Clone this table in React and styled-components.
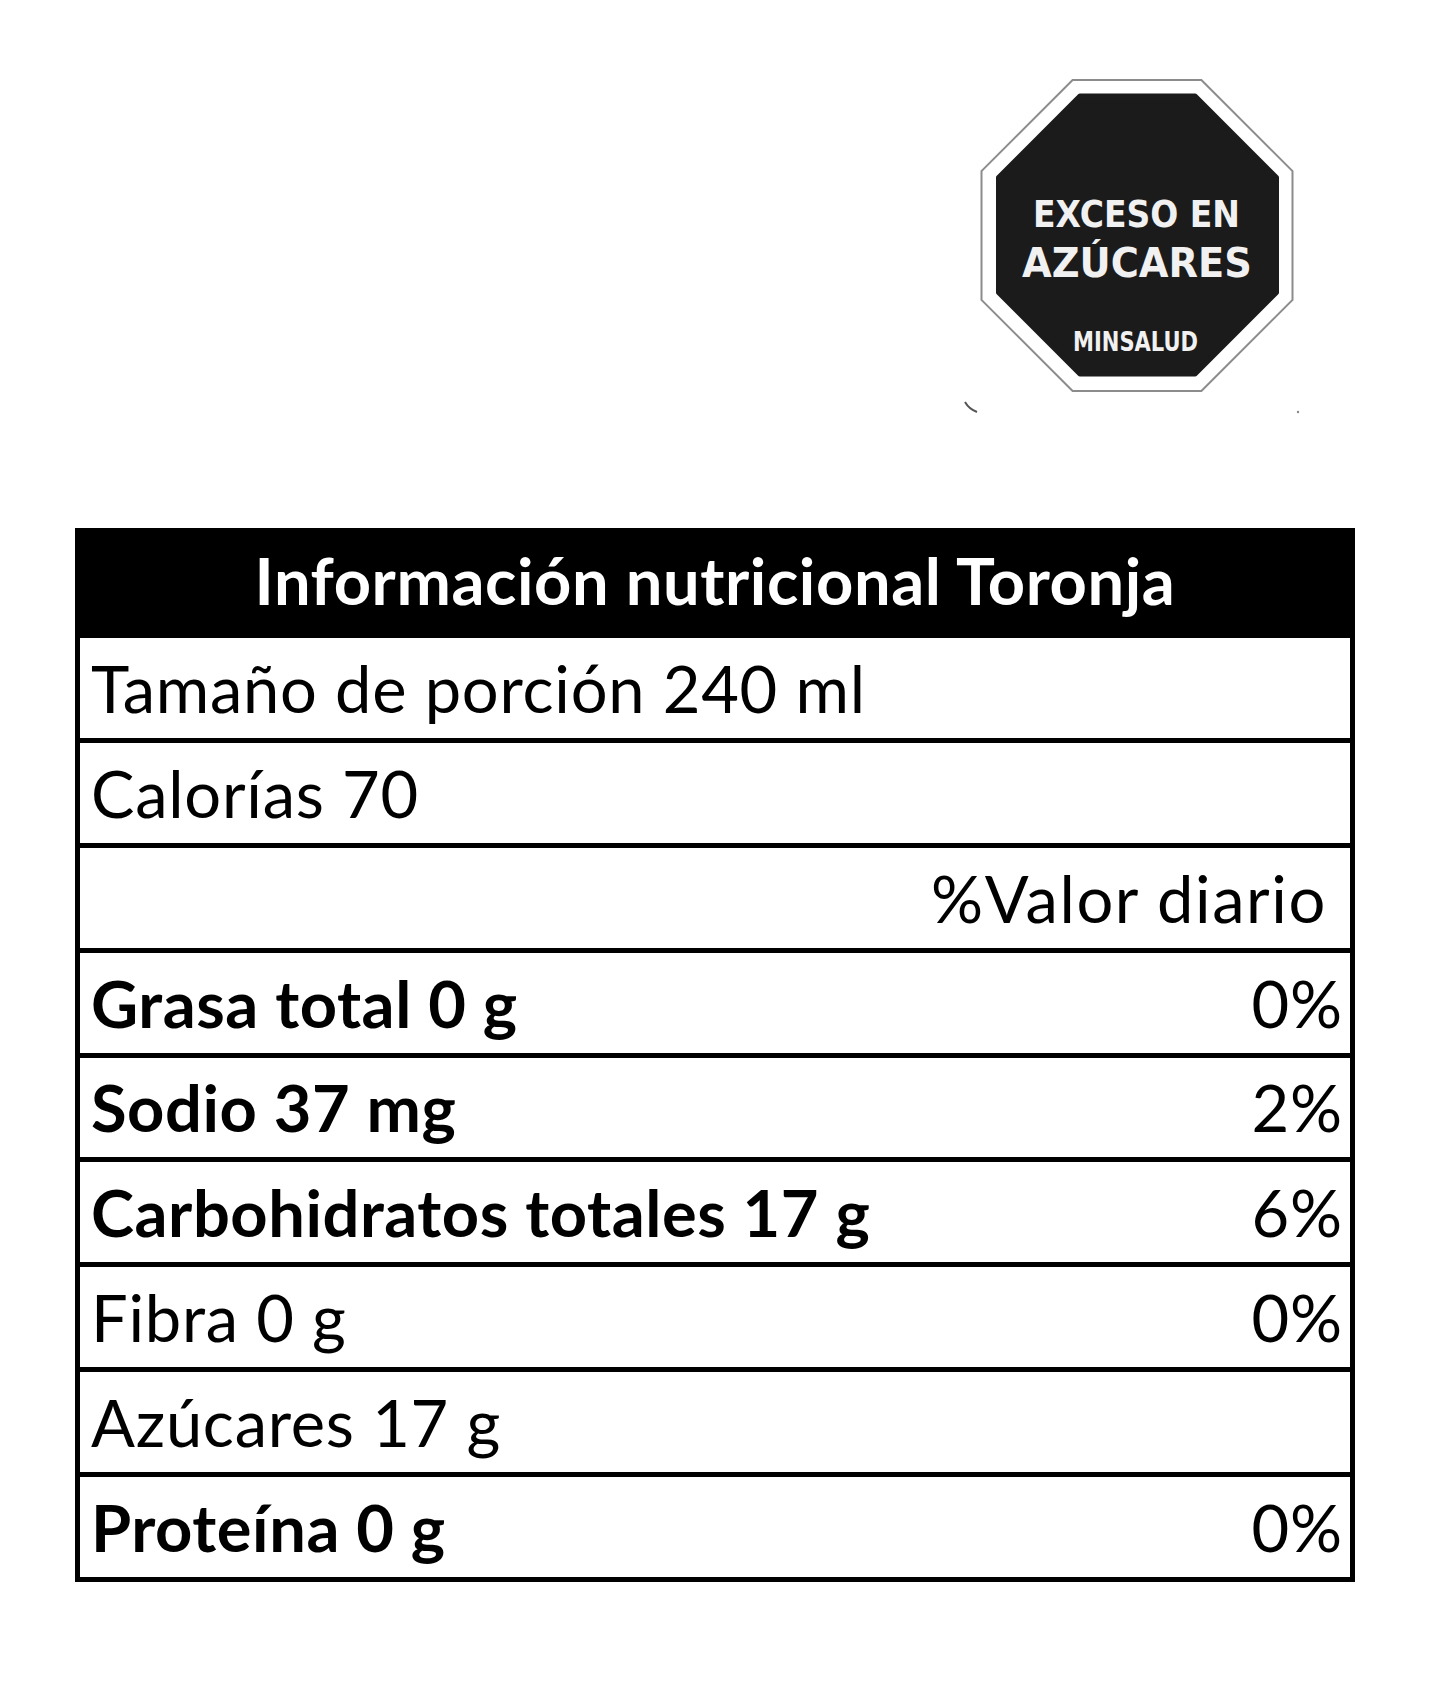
import styled, { createGlobalStyle } from 'styled-components';

const GlobalStyle = createGlobalStyle`
  html, body {
    margin: 0;
    padding: 0;
    background: #ffffff;
  }
`;

const Page = styled.main`
  width: 1445px;
  min-height: 1686px;
  background: #ffffff;
  font-family: Lato, 'Open Sans', sans-serif;
  color: #000;
`;

const SealRow = styled.div`
  display: flex;
  justify-content: flex-end;
  padding: 70px 135px 0 0;
`;

const Table = styled.section`
  box-sizing: border-box;
  width: 1280px;
  margin: 108px 0 0 75px;
  border: 5px solid #000;
`;

const Header = styled.h1`
  box-sizing: border-box;
  height: 100px;
  margin: 0;
  padding-bottom: 14px;
  display: flex;
  align-items: flex-end;
  justify-content: center;
  background: #000;
  color: #fff;
  font-size: 65px;
  font-weight: 700;
  line-height: 1.2;
  letter-spacing: 0.6px;
`;

const Row = styled.div`
  box-sizing: border-box;
  height: 104.9px;
  padding: 0 7px 11px 11px;
  display: flex;
  align-items: flex-end;
  justify-content: space-between;
  border-top: 5px solid #000;
  font-size: 65px;
  line-height: 1.2;
  letter-spacing: 0.7px;
`;

const Label = styled.span`
  font-weight: ${(p) => (p.$bold ? 700 : 400)};
  letter-spacing: ${(p) => (p.$bold ? '0.55px' : '0.75px')};
`;

const Value = styled.span`
  margin-left: auto;
  padding-right: ${(p) => (p.$wide ? '16px' : '0')};
  font-weight: 400;
  letter-spacing: ${(p) => (p.$wide ? '1.6px' : '0.9px')};
`;

const rows = [
  { label: 'Tamaño de porción 240 ml' },
  { label: 'Calorías 70' },
  { value: '%Valor diario', wide: true },
  { label: 'Grasa total 0 g', bold: true, value: '0%' },
  { label: 'Sodio 37 mg', bold: true, value: '2%' },
  { label: 'Carbohidratos totales 17 g', bold: true, value: '6%' },
  { label: 'Fibra 0 g', value: '0%' },
  { label: 'Azúcares 17 g' },
  { label: 'Proteína 0 g', bold: true, value: '0%' },
];

// flat-topped octagon around (cx, cy) with half-width a
const octagon = (cx, cy, a) => {
  const c = a * 0.4142;
  return [
    [cx - c, cy - a], [cx + c, cy - a], [cx + a, cy - c], [cx + a, cy + c],
    [cx + c, cy + a], [cx - c, cy + a], [cx - a, cy + c], [cx - a, cy - c],
  ].map((p) => p.join(',')).join(' ');
};

const SealText = styled.text`
  font-family: 'DejaVu Sans Condensed', 'DejaVu Sans', sans-serif;
  font-weight: 700;
  fill: #f1f1f1;
`;

const Seal = () => (
  <svg width="350" height="350" viewBox="0 0 350 350">
    <polygon points={octagon(177, 165.5, 155.5)} fill="#fff" stroke="#8c8c8c" strokeWidth="2" />
    <polygon
      points={octagon(177.5, 165, 139)}
      fill="#1b1b1b"
      stroke="#1b1b1b"
      strokeWidth="5"
      strokeLinejoin="round"
    />
    <SealText x="73" y="157" fontSize="37" textLength="207" lengthAdjust="spacingAndGlyphs">
      EXCESO EN
    </SealText>
    <SealText x="62" y="207" fontSize="41" textLength="230" lengthAdjust="spacingAndGlyphs">
      AZÚCARES
    </SealText>
    <SealText x="113" y="281" fontSize="26" textLength="125" lengthAdjust="spacingAndGlyphs">
      MINSALUD
    </SealText>
    <path d="M5 332 Q9 339 17 342" fill="none" stroke="#555" strokeWidth="2" />
    <circle cx="338" cy="342" r="1.2" fill="#888" />
  </svg>
);

const App = () => {
  return (
    <Page>
      <GlobalStyle />
      <SealRow>
        <Seal />
      </SealRow>
      <Table>
        <Header>Información nutricional Toronja</Header>
        {rows.map((r, i) => (
          <Row key={i}>
            {r.label && <Label $bold={r.bold}>{r.label}</Label>}
            {r.value && <Value $wide={r.wide}>{r.value}</Value>}
          </Row>
        ))}
      </Table>
    </Page>
  );
};

export default App;
